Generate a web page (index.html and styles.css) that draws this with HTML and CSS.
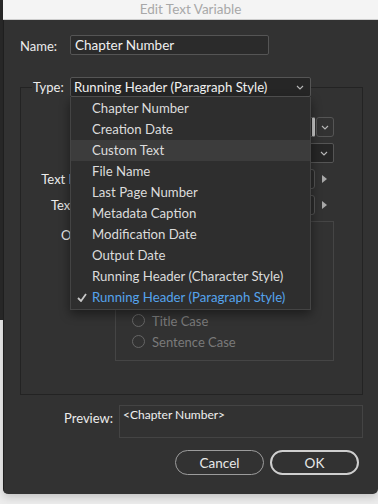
FILE: index.html
```html
<!DOCTYPE html>
<html lang="en">
<head>
  <meta charset="UTF-8">
  <title>Edit Text Variable</title>
  <link rel="stylesheet" href="styles.css">
</head>
<body>
  <div class="screen">
    <div class="behind"><div class="behind-win"></div></div>

    <div class="window">
      <div class="titlebar">Edit Text Variable</div>

      <div class="dialog">
        <div class="name-row">
          <span class="lbl name-lbl">Name:</span>
          <div class="field name-field">Chapter Number</div>
        </div>

        <fieldset class="group">
          <legend class="type-legend">
            <span class="lbl type-lbl">Type:</span>
            <div class="select-wrap">
              <div class="select type-select">
                <span>Running Header (Paragraph Style)</span>
                <svg class="chev" width="8" height="5" viewBox="0 0 8 5"><path d="M1 1l3 3 3-3" fill="none" stroke="#b8b8b8" stroke-width="1.1"/></svg>
              </div>
              <ul class="menu">
                <li>Chapter Number</li>
                <li>Creation Date</li>
                <li class="hover">Custom Text</li>
                <li>File Name</li>
                <li>Last Page Number</li>
                <li>Metadata Caption</li>
                <li>Modification Date</li>
                <li>Output Date</li>
                <li>Running Header (Character Style)</li>
                <li class="checked">
                  <svg class="check" width="10" height="9" viewBox="0 0 10 9"><path d="M1 5l3 3 5-7" fill="none" stroke="#c8c8c8" stroke-width="1.8"/></svg>
                  Running Header (Paragraph Style)
                </li>
              </ul>
            </div>
          </legend>

          <!-- rows under the open menu: only their right ends show -->
          <div class="rows">
            <span class="row-lbl"></span>
            <div class="combo">
              <div class="field light-edge"></div>
              <div class="dropbtn">
                <svg width="8" height="5" viewBox="0 0 8 5"><path d="M1 1l3 3 3-3" fill="none" stroke="#b8b8b8" stroke-width="1.1"/></svg>
              </div>
            </div>

            <span class="row-lbl"></span>
            <div class="select use-select">
              <span></span>
              <svg class="chev" width="8" height="5" viewBox="0 0 8 5"><path d="M1 1l3 3 3-3" fill="none" stroke="#b8b8b8" stroke-width="1.1"/></svg>
            </div>

            <span class="lbl row-lbl">Text Before:</span>
            <div class="text-row">
              <div class="field text-field"></div>
              <span class="arrow"></span>
            </div>

            <span class="lbl row-lbl">Text After:</span>
            <div class="text-row">
              <div class="field text-field"></div>
              <span class="arrow"></span>
            </div>

            <span class="lbl row-lbl opt-lbl">Options:</span>
            <div class="options">
              <div class="opt"></div>
              <div class="opt"></div>
              <div class="opt sub"></div>
              <div class="opt sub"></div>
              <div class="opt sub"><span class="radio"></span>Title Case</div>
              <div class="opt sub"><span class="radio"></span>Sentence Case</div>
            </div>
          </div>
        </fieldset>

        <div class="preview-row">
          <span class="lbl preview-lbl">Preview:</span>
          <div class="preview-box">&lt;Chapter Number&gt;</div>
        </div>

        <div class="buttons">
          <button class="btn">Cancel</button>
          <button class="btn btn-ok">OK</button>
        </div>
      </div>
    </div>
  </div>
</body>
</html>
```

FILE: styles.css
```css
* { box-sizing: border-box; margin: 0; padding: 0; }
body {
  background: #ececec;
  font-family: Lato, "Open Sans", sans-serif;
  font-size: 13px;
  color: #e4e4e4;
}
.screen {
  display: flex;
  width: 378px;
  height: 504px;
  overflow: hidden;
}
.behind { width: 3px; flex: none; }
.behind-win { height: 320px; background: #2a2a2a; }

.window {
  flex: 1;
  display: flex;
  flex-direction: column;
  align-self: flex-start;
  border-radius: 0 0 5px 5px;
  box-shadow: 0 3px 8px rgba(0, 0, 0, 0.18);
}
.titlebar {
  height: 20px;
  line-height: 19px;
  background: #f4f4f4;
  border-bottom: 1px solid #cdcdcd;
  color: #a8a8a8;
  text-align: center;
  font-size: 13.5px;
}
.dialog {
  background: #323232;
  border-left: 1px solid #1f1f1f;
  border-radius: 0 0 5px 5px;
  padding: 15px 15px 19px 16px;
}

.lbl { color: #ececec; }
.field {
  height: 20px;
  border: 1px solid #555;
  border-radius: 2px;
  background: #2b2b2b;
}

.name-row { display: flex; align-items: center; }
.name-lbl { width: 50px; padding-top: 1px; }
.name-field {
  width: 199px;
  padding-left: 4px;
  line-height: 19px;
  color: #f0f0f0;
  font-size: 13.5px;
}

.group {
  margin-top: 22px;
  border: 1px solid #232323;
  padding: 0 28px 33px 0;
}
.type-legend {
  margin-left: 11px;
  padding-left: 1px;
  display: flex;
  align-items: center;
}
.type-lbl { width: 37px; }
.select-wrap { position: relative; }
.select {
  height: 20px;
  border: 1px solid #555;
  border-radius: 2px;
  background: #262626;
  display: flex;
  align-items: center;
  justify-content: space-between;
  padding: 0 6px 0 3px;
}
.type-select { width: 241px; color: #f0f0f0; font-size: 13.2px; }

.menu {
  position: absolute;
  top: 100%;
  left: 0;
  z-index: 10;
  width: 241px;
  list-style: none;
  background: #2e2e2e;
  border: 1px solid #444;
  border-top: none;
  box-shadow: 0 4px 10px rgba(0, 0, 0, 0.45);
  padding: 1px 0 1px;
}
.menu li {
  position: relative;
  height: 21px;
  line-height: 21px;
  padding-left: 21px;
  color: #dcdcdc;
  font-size: 13.2px;
}
.menu li.hover { background: #3c3c3c; }
.menu li.checked { color: #55a3ec; }
.check { position: absolute; left: 6px; top: 6px; }

.rows {
  display: grid;
  grid-template-columns: 89px 219px;
  column-gap: 5px;
  row-gap: 6px;
  padding-top: 20px;
  align-items: center;
}
.row-lbl { text-align: right; }
.opt-lbl { align-self: start; padding-top: 6px; }

.combo { display: flex; gap: 1px; }
.light-edge { flex: 1; border-right: 3px solid #c9c9c9; }
.dropbtn {
  width: 18px;
  height: 20px;
  border: 1px solid #555;
  border-radius: 3px;
  display: flex;
  align-items: center;
  justify-content: center;
}
.use-select { width: 219px; padding-right: 5px; }

.text-row { display: flex; align-items: center; gap: 7px; }
.text-field { width: 200px; border-radius: 3px; }
.arrow {
  width: 0;
  height: 0;
  border-top: 4px solid transparent;
  border-bottom: 4px solid transparent;
  border-left: 5px solid #a8a8a8;
}

.options {
  height: 140px;
  border: 1px solid #454545;
  padding: 4px 0 0 8px;
  color: #7a7a7a;
}
.opt {
  height: 21px;
  display: flex;
  align-items: center;
  gap: 7px;
}
.opt.sub { padding-left: 8px; }
.radio {
  width: 13px;
  height: 13px;
  border: 1px solid #666;
  border-radius: 50%;
}

.preview-row {
  display: flex;
  margin-top: 10px;
}
.preview-lbl {
  width: 99px;
  text-align: right;
  padding: 5px 6px 0 0;
}
.preview-box {
  flex: 1;
  height: 33px;
  border: 1px solid #444;
  padding: 1px 0 0 3px;
  font-size: 12px;
  color: #f0f0f0;
}

.buttons {
  display: flex;
  justify-content: flex-end;
  gap: 6px;
  margin: 12px 4px 0 0;
}
.btn {
  width: 89px;
  height: 25px;
  border: 1px solid #9c9c9c;
  border-radius: 13px;
  background: transparent;
  color: #e8e8e8;
  font-family: Lato, "Open Sans", sans-serif;
  font-size: 13.5px;
}
.btn-ok { border: 2px solid #cfcfcf; }
```
